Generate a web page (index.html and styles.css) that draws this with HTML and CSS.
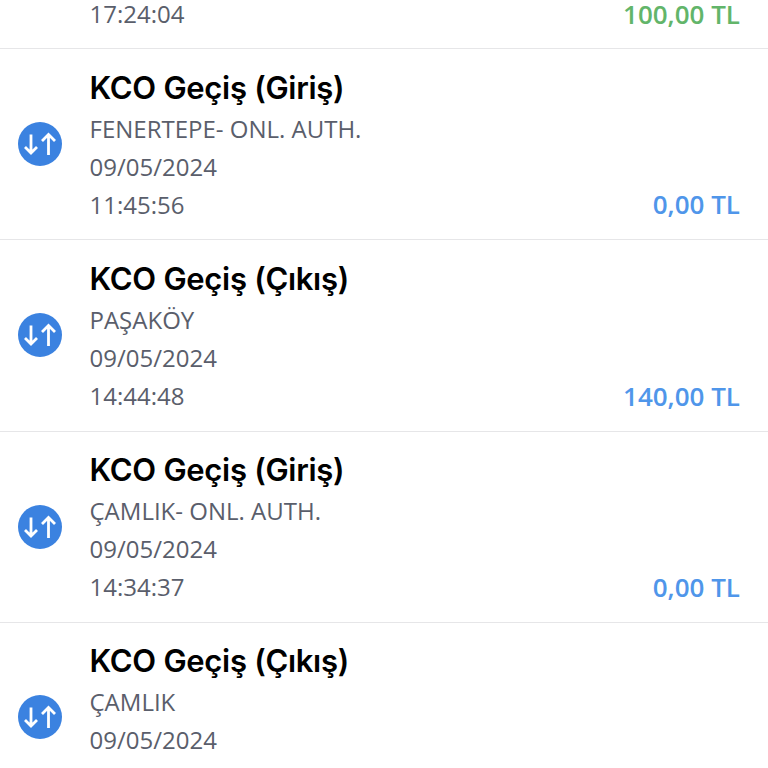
FILE: index.html
```html
<!DOCTYPE html>
<html lang="tr">
<head>
<meta charset="utf-8">
<title>KCO Geçiş</title>
<link rel="stylesheet" href="styles.css">
</head>
<body>
<main class="list">
  <section class="row row-partial">
    <div class="line">17:24:04</div>
    <div class="amount green">100,00 TL</div>
  </section>
  <section class="row">
    <svg class="icon" viewBox="0 0 44 44"><circle cx="22" cy="22" r="22" fill="#3b82e0"/><path d="M13 12.500V31M7 25l6 6 6-6M30.500 33V13M24 19l6.500-6.500L37 19" fill="none" stroke="#fff" stroke-width="2.800"/></svg>
    <div class="lines">
      <div class="title">KCO Geçiş (Giriş)</div>
      <div class="line">FENERTEPE- ONL. AUTH.</div>
      <div class="line">09/05/2024</div>
      <div class="line">11:45:56</div>
    </div>
    <div class="amount blue">0,00 TL</div>
  </section>
  <section class="row">
    <svg class="icon" viewBox="0 0 44 44"><circle cx="22" cy="22" r="22" fill="#3b82e0"/><path d="M13 12.500V31M7 25l6 6 6-6M30.500 33V13M24 19l6.500-6.500L37 19" fill="none" stroke="#fff" stroke-width="2.800"/></svg>
    <div class="lines">
      <div class="title">KCO Geçiş (Çıkış)</div>
      <div class="line">PAŞAKÖY</div>
      <div class="line">09/05/2024</div>
      <div class="line">14:44:48</div>
    </div>
    <div class="amount blue">140,00 TL</div>
  </section>
  <section class="row">
    <svg class="icon" viewBox="0 0 44 44"><circle cx="22" cy="22" r="22" fill="#3b82e0"/><path d="M13 12.500V31M7 25l6 6 6-6M30.500 33V13M24 19l6.500-6.500L37 19" fill="none" stroke="#fff" stroke-width="2.800"/></svg>
    <div class="lines">
      <div class="title">KCO Geçiş (Giriş)</div>
      <div class="line">ÇAMLIK- ONL. AUTH.</div>
      <div class="line">09/05/2024</div>
      <div class="line">14:34:37</div>
    </div>
    <div class="amount blue">0,00 TL</div>
  </section>
  <section class="row row-last">
    <svg class="icon" viewBox="0 0 44 44"><circle cx="22" cy="22" r="22" fill="#3b82e0"/><path d="M13 12.500V31M7 25l6 6 6-6M30.500 33V13M24 19l6.500-6.500L37 19" fill="none" stroke="#fff" stroke-width="2.800"/></svg>
    <div class="lines">
      <div class="title">KCO Geçiş (Çıkış)</div>
      <div class="line">ÇAMLIK</div>
      <div class="line">09/05/2024</div>
    </div>
  </section>
</main>
</body>
</html>
```
FILE: styles.css
```css
html, body {
  margin: 0;
  height: 768px;
  overflow: hidden;
  background: #fff;
}
.list {
  display: flex;
  flex-direction: column;
  font-family: Inter, "Noto Sans", sans-serif;
}
.row {
  box-sizing: border-box;
  height: 191.33px;
  flex: none;
  display: flex;
  align-items: center;
  gap: 28px;
  padding: 19px 28px 15px 17.5px;
  border-bottom: 1.5px solid #e6e6e8;
}
.row-partial {
  height: 49px;
  padding: 0 28px 21px 89.5px;
  align-items: flex-end;
  justify-content: space-between;
}
.row-partial .line,
.row-partial .amount {
  line-height: 26px;
  margin-bottom: 0;
}
.row-last {
  height: 146px;
  padding-bottom: 0;
  border-bottom: 0;
  align-items: flex-start;
}
.row-last .icon {
  margin-top: 53px;
}
.icon {
  width: 44px;
  height: 44px;
  flex: none;
  margin-bottom: 4px;
}
.lines {
  flex: 1;
  display: flex;
  flex-direction: column;
}
.title {
  font-size: 31px;
  font-weight: 600;
  line-height: 38px;
  margin-bottom: 3px;
  color: #000;
  letter-spacing: -0.3px;
}
.line {
  font-family: "Open Sans", sans-serif;
  font-size: 24px;
  line-height: 38px;
  color: #5a5e6b;
}
.amount {
  font-family: "Open Sans", sans-serif;
  font-size: 26px;
  font-weight: 600;
  line-height: 38px;
  align-self: flex-end;
  margin-bottom: 1px;
}
.green { color: #62b56a; }
.blue { color: #4f96ea; }
```
